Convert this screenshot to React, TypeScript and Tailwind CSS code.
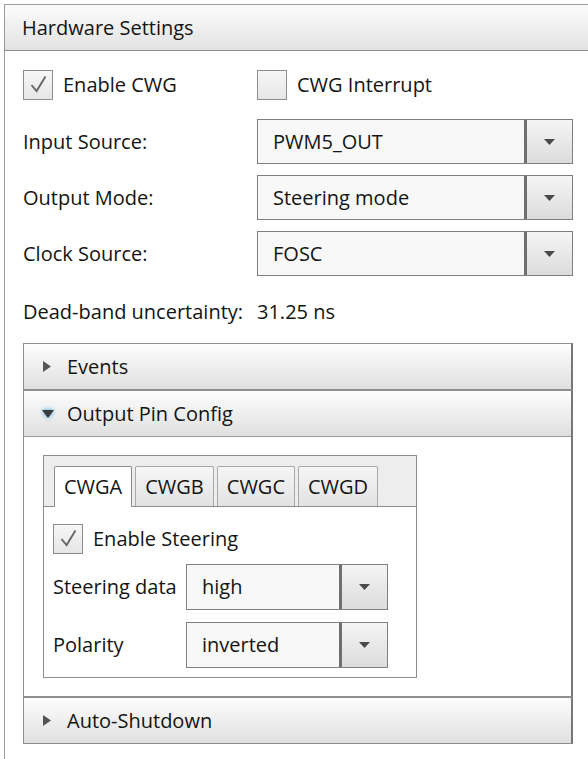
import type { ReactNode } from "react"

function Caret() {
  return (
    <svg width="11" height="6" viewBox="0 0 11 6">
      <path d="M0 0H11L5.5 6Z" fill="#4a4a4a" />
    </svg>
  )
}

function CheckBox({ checked, label }: { checked?: boolean; label: string }) {
  return (
    <div className="flex items-center gap-[10px]">
      <div className="flex h-[30px] w-[30px] items-center justify-center border border-[#8c8c8c] bg-gradient-to-b from-[#f7f7f7] to-[#e6e6e6]">
        {checked && (
          <svg width="30" height="30" viewBox="0 0 30 30">
            <path d="M8 15L13.5 21.5L23 6" stroke="#666666" strokeWidth="2" fill="none" />
          </svg>
        )}
      </div>
      <span>{label}</span>
    </div>
  )
}

function Combo({ value, h = "h-[45px]" }: { value: string; h?: string }) {
  return (
    <div className={`flex ${h} border border-[#7f7f7f] bg-[#f8f8f8]`}>
      <div className="flex flex-1 items-center pl-[15px]">{value}</div>
      <div className="flex w-[48px] items-center justify-center border-l-[3px] border-[#6f6f6f] bg-gradient-to-b from-[#f5f5f5] to-[#dcdcdc]">
        <Caret />
      </div>
    </div>
  )
}

function ExpanderHeader({ open, title }: { open?: boolean; title: string }) {
  return (
    <div className="flex h-[45px] items-center bg-gradient-to-b from-[#fdfdfd] to-[#e0e0e0] pl-[17px]">
      <div className="flex w-[26px] items-center">
        {open ? (
          <svg width="14" height="10" viewBox="0 0 14 10" className="drop-shadow-[0_0_2px_#1da6e6]">
            <path d="M1 1H13L7 9Z" fill="#3a3a3a" />
          </svg>
        ) : (
          <svg width="8" height="11" viewBox="0 0 8 11" className="ml-[2px]">
            <path d="M0 0L8 5.5L0 11Z" fill="#555555" />
          </svg>
        )}
      </div>
      <span>{title}</span>
    </div>
  )
}

function Tab({ children, active }: { children: ReactNode; active?: boolean }) {
  return (
    <div
      className={
        active
          ? "relative z-10 -mb-px flex h-[41px] items-center rounded-t-[2px] border border-b-0 border-[#8c8c8c] bg-white px-[9px]"
          : "flex h-[40px] items-center rounded-t-[2px] border border-b-0 border-[#a9a9a9] bg-gradient-to-b from-[#f6f6f6] to-[#e2e2e2] px-[9px]"
      }
    >
      {children}
    </div>
  )
}

export default function App() {
  return (
    <div className="h-[759px] overflow-hidden bg-white pl-[4px] pt-[4px] font-['Open_Sans',sans-serif] text-[20px] leading-[26px] text-[#141414]">
      <div className="h-full border-l border-t border-[#9c9c9c]">
        {/* Header */}
        <div className="flex h-[46px] items-center border-b border-[#8a8a8a] bg-gradient-to-b from-[#fcfcfc] to-[#e2e2e2] pl-[17px]">
          Hardware Settings
        </div>

        <div className="pl-[18px] pr-[15px] pt-[19px]">
          <div className="grid grid-cols-[234px_1fr] items-center">
            <CheckBox checked label="Enable CWG" />
            <CheckBox label="CWG Interrupt" />
          </div>

          <div className="mt-[19px] flex flex-col gap-[11px]">
            <div className="grid grid-cols-[234px_1fr] items-center">
              <span>Input Source:</span>
              <Combo value="PWM5_OUT" />
            </div>
            <div className="grid grid-cols-[234px_1fr] items-center">
              <span>Output Mode:</span>
              <Combo value="Steering mode" />
            </div>
            <div className="grid grid-cols-[234px_1fr] items-center">
              <span>Clock Source:</span>
              <Combo value="FOSC" />
            </div>
          </div>

          <div className="mt-[23px] grid grid-cols-[234px_1fr]">
            <span>Dead-band uncertainty:</span>
            <span>31.25 ns</span>
          </div>

          {/* Expanders */}
          <div className="mt-[18px]">
            <div className="border border-r-2 border-[#8f8f8f] border-r-[#777777]">
              <ExpanderHeader title="Events" />
            </div>

            <div className="border border-r-2 border-[#8f8f8f] border-r-[#777777]">
              <div className="border-b border-[#9a9a9a]">
                <ExpanderHeader open title="Output Pin Config" />
              </div>
              <div className="bg-white pb-[18px] pl-[19px] pt-[18px]">
                <div className="w-[374px] border border-[#8c8c8c] bg-[#ededed]">
                  <div className="flex gap-[3px] pl-[10px] pt-[10px]">
                    <Tab active>CWGA</Tab>
                    <Tab>CWGB</Tab>
                    <Tab>CWGC</Tab>
                    <Tab>CWGD</Tab>
                  </div>
                  <div className="border-t border-[#8c8c8c] bg-white pb-[9px] pl-[9px] pr-[28px] pt-[17px]">
                    <CheckBox checked label="Enable Steering" />
                    <div className="mt-[10px] flex flex-col gap-[12px]">
                      <div className="grid grid-cols-[133px_1fr] items-center">
                        <span>Steering data</span>
                        <Combo value="high" h="h-[46px]" />
                      </div>
                      <div className="grid grid-cols-[133px_1fr] items-center">
                        <span>Polarity</span>
                        <Combo value="inverted" h="h-[46px]" />
                      </div>
                    </div>
                  </div>
                </div>
              </div>
            </div>

            <div className="border border-r-2 border-[#8f8f8f] border-r-[#777777]">
              <ExpanderHeader title="Auto-Shutdown" />
            </div>
          </div>
        </div>
      </div>
    </div>
  )
}
